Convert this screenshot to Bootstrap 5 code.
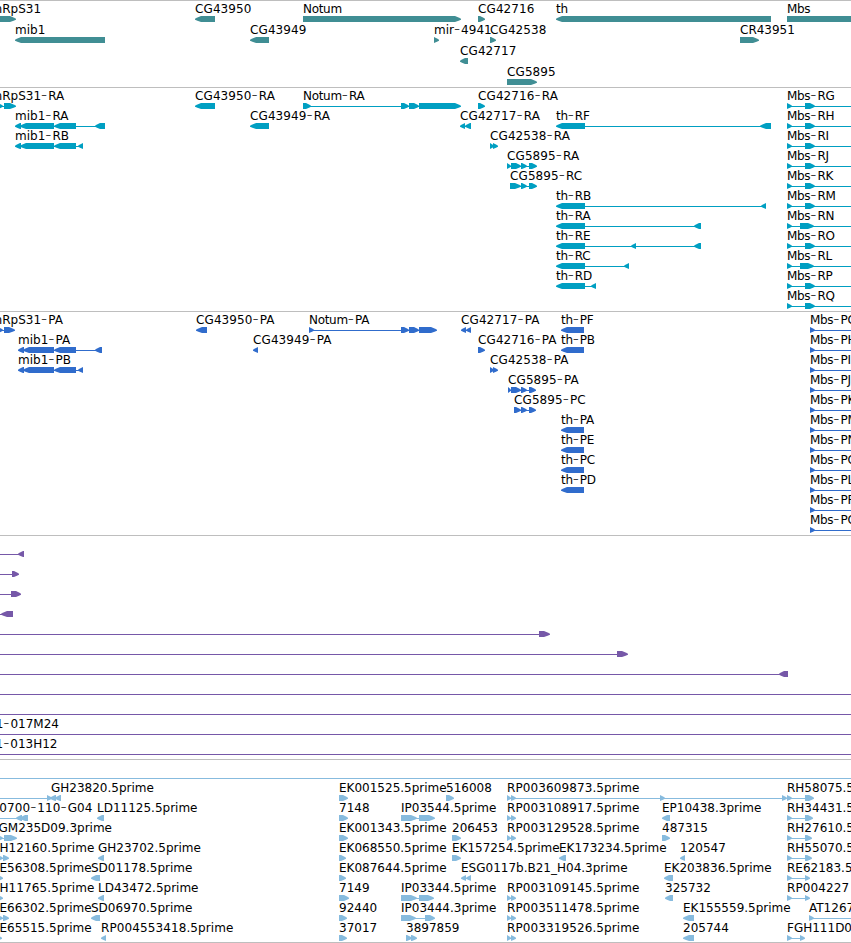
<!DOCTYPE html>
<html lang="en">
<head>
<meta charset="utf-8">
<meta name="viewport" content="width=device-width, initial-scale=1">
<title>Genome browser</title>
<link href="https://cdn.jsdelivr.net/npm/bootstrap@5.3.0/dist/css/bootstrap.min.css" rel="stylesheet">
<style>
  body { font-family: "DejaVu Sans", sans-serif; font-size: 12px; }
  .browser { height: 943px; }
  .track { border-top: 1px solid #bebebe; height: 224px; }
  .track-genes { height: 87px; color: #408e94; }
  .track-transcripts { color: #009fc2; }
  .track-proteins { color: #306ccc; }
  .track-clones { color: #7658a8; }
  .track-ests { height: 184px; color: #87bbde; border-bottom: 1px solid #bebebe; }
  .lane { height: 20px; flex: none; overflow: visible; }
  .track-genes .lane { height: 21px; }
  .lane text { fill: #000; font-size: 12px; }
  .lane .wide { letter-spacing: .1px; }
  .lane .tight { letter-spacing: -.3px; }
  .lane .dash { font-size: 17px; font-weight: 200; letter-spacing: 1px; }
</style>
</head>
<body class="bg-white m-0">
<main class="browser w-100 overflow-hidden d-flex flex-column">
  <section class="track track-genes d-flex flex-column flex-shrink-0" id="genes" aria-label="Genes"></section>
  <section class="track track-transcripts d-flex flex-column flex-shrink-0" id="transcripts" aria-label="Transcripts"></section>
  <section class="track track-proteins d-flex flex-column flex-shrink-0" id="proteins" aria-label="Proteins"></section>
  <section class="track track-clones d-flex flex-column flex-shrink-0" id="clones" aria-label="Clones"></section>
  <section class="track track-ests d-flex flex-column flex-shrink-0" id="ests" aria-label="ESTs"></section>
</main>
<script src="https://cdn.jsdelivr.net/npm/bootstrap@5.3.0/dist/js/bootstrap.bundle.min.js"></script>
<script>
// One string per lane; features are separated by ";".
// Feature: labelX | label | strand (> or <) | exons "a_b,a_b" | optional connector "from:to"
// A labelX that starts with "e" is the right end of the label; "~" is a minus sign.
const tracks = {
  genes: [
    "-9.5|mRpS31|>|~20_16;195|CG43950|<|195_215;303|Notum|>|303_461;478|CG42716|>|478_485;556|th|<|556_771;787|Mbs|>|787_900",
    "15|mib1|<|15_105;250|CG43949|<|250_269;434|mir-4941|>|434_439;490|CG42538|>|490_496;740|CR43951|>|740_759",
    "460|CG42717|<|460_468",
    "507|CG5895|>|507_537"
  ],
  transcripts: [
    "-9.5|mRpS31-RA|>|~5_3,4_16;195|CG43950-RA|<|195_215;303|Notum-RA|>|303_311,401_409,409_419,419_461;478|CG42716-RA|>|478_485;787|Mbs-RG|>|787_792,805_815|787:860",
    "15|mib1-RA|<|15_21,20_54,54_76,95_105;250|CG43949-RA|<|250_269;460|CG42717-RA|<|460_465,465_471;556|th-RF|<|556_585,760_771;787|Mbs-RH|>|787_792,805_815|787:860",
    "15|mib1-RB|<|15_21,20_54,54_76,78_83;490|CG42538-RA|>|490_494,493_498;787|Mbs-RI|>|787_792,805_815|787:860",
    "507|CG5895-RA|>|507_511,511_521,521_527,529_537;787|Mbs-RJ|>|787_792,805_815|787:860",
    "510|CG5895-RC|>|510_521,521_527,529_537;787|Mbs-RK|>|787_792,805_815|787:860",
    "556|th-RB|<|556_585,761_766;787|Mbs-RM|>|787_792,805_815|787:860",
    "556|th-RA|<|556_585,694_701;787|Mbs-RN|>|787_792,800_814|787:860",
    "556|th-RE|<|556_585,631_636,694_701;787|Mbs-RO|>|787_792,805_815|787:860",
    "556|th-RC|<|556_585,624_629;787|Mbs-RL|>|787_792,800_814|787:860",
    "556|th-RD|<|556_585,591_596;787|Mbs-RP|>|787_792,805_815|787:860",
    "787|Mbs-RQ|>|787_792,805_815|787:860"
  ],
  proteins: [
    "-9.5|mRpS31-PA|>|~5_3,4_15;196|CG43950-PA|<|196_207;309|Notum-PA|>|309_314,401_409,409_419,419_437;461|CG42717-PA|<|461_466,466_471;561|th-PF|<|561_584;810|Mbs-PG|>|810_815|810:860",
    "18|mib1-PA|<|18_24,23_54,54_76,95_102;253|CG43949-PA|<|253_258;478|CG42716-PA|>|478_485;561|th-PB|<|561_584;810|Mbs-PH|>|810_815|810:860",
    "18|mib1-PB|<|18_24,23_54,54_76,78_83;490|CG42538-PA|>|490_494,493_498;810|Mbs-PI|>|810_815|810:860",
    "508|CG5895-PA|>|508_511,511_521,521_527,529_536;810|Mbs-PJ|>|810_815|810:860",
    "514|CG5895-PC|>|514_521,521_527,529_536;810|Mbs-PK|>|810_815|810:860",
    "561|th-PA|<|561_584;810|Mbs-PM|>|810_815|810:860",
    "561|th-PE|<|561_584;810|Mbs-PN|>|810_815|810:860",
    "561|th-PC|<|561_584;810|Mbs-PO|>|810_815|810:860",
    "561|th-PD|<|561_584;810|Mbs-PL|>|810_815|810:860",
    "810|Mbs-PP|>|810_815|810:860",
    "810|Mbs-PQ|>|810_815|810:860"
  ],
  clones: [
    "0||<|18_24|0:20", "0||>|12_19|0:14", "0||>|11_21|0:14", "0||<|1_13|0:4",
    "0||>|539_550|0:540", "0||>|617_628|0:618", "0||<|779_788|0:782",
    "0||>||0:860", "0||>||0:860",
    "e59|1-017M24|>||0:860", "e57.5|1-013H12|>||0:860"
  ],
  ests: [
    "0||>||0:860",
    "0||>|47_52|0:48;51|GH23820.5prime|<|50_56,55_61;339|EK001525.5prime|>|339_348;446|516008|>|446_454;507|RP003609873.5prime|>|507_511,511_516,660_665,782_787;787|RH58075.5prime|>|787_792,805_814",
    "-0.8|0700-110-G04|<|16_22,20_28|0:18;97|LD11125.5prime|<|97_104;339|7148|>|339_348;401|IP03544.5prime|>|401_417,419_435;507|RP003108917.5prime|>|507_511,511_516;662|EP10438.3prime|<|662_670;787|RH34431.5prime|>|787_792,805_813",
    "-1.5|GM235D09.3prime|>|~4_3,4_17;339|EK001343.5prime|>|339_348;452|206453|>|452_461;507|RP003129528.5prime|>|507_511,511_516;662|487315|>|662_670;787|RH27610.5prime|>|787_792,805_812",
    "-0.5|H12160.5prime|>|~4_3,3_9;98|GH23702.5prime|<|98_104;339|EK068550.5prime|>|339_346;452|EK157254.5prime|>|452_461;559|EK173234.5prime|<|559_566;680|120547|<|680_685;787|RH55070.5prime|>|787_792,805_812",
    "-0.5|E56308.5prime|>|~4_3;91|SD01178.5prime|<|91_100;339|EK087644.5prime|>|339_346;461|ESG0117b.B21_H04.3prime|<|461_466,466_471;664|EK203836.5prime|<|664_673;787|RE62183.5prime|>|787_792,805_810",
    "-0.5|H11765.5prime|>|~4_3;98|LD43472.5prime|<|98_104;339|7149|>|339_349;401|IP03344.5prime|>|401_417,419_434;507|RP003109145.5prime|>|507_511,511_516;665|325732|<|665_673;787|RP004227|>|787_792,805_810",
    "-0.5|E66302.5prime|>|~4_3,3_9;91|SD06970.5prime|<|91_100;339|92440|>|339_347;401|IP03444.3prime|>|401_416,425_435;507|RP003511478.5prime|>|507_511,511_516;683|EK155559.5prime|<|683_694;809|AT12677|>|809_814|809:860",
    "-0.5|E65515.5prime|>|~4_2;101|RP004553418.5prime|<|101_106;339|37017|>|339_347;406|3897859|>|406_412,411_417;507|RP003319526.5prime|>|507_511,511_516;683|205744|<|683_694;787|FGH111D0|>|787_792,800_805"
  ]
};

// Block arrow: square at the tail, tapered to a point over the last pixels.
function exon(a, b, strand) {
  const w = b - a, h = Math.min(w, w > 10 ? 6 : 5), m = h * 0.6;
  const p = strand === ">"
    ? [[a,15],[b-h,15],[b-h+m,16.6],[b,17.8],[b,18.8],[b-h+m,19.8],[b-h,21],[a,21]]
    : [[b,15],[a+h,15],[a+h-m,16.6],[a,17.8],[a,18.8],[a+h-m,19.8],[a+h,21],[b,21]];
  return `<polygon points="${p.map(q => q.join()).join(" ")}"/>`;
}

function feature(spec) {
  const [x, label, strand, exonList, link] = spec.split("|");
  const exons = exonList ? exonList.replace("~", "-").split(",").map(e => e.split("_").map(Number)) : [];
  const span = link ? link.split(":").map(Number)
    : exons.length > 1 ? [exons[0][0] + 2, exons[exons.length - 1][1] - 2] : null;
  let out = span ? `<rect x="${span[0]}" y="18" width="${span[1] - span[0]}" height="1"/>` : "";
  out += exons.map(e => exon(e[0], e[1], strand)).join("");
  if (label) {
    const end = x[0] === "e";
    const fit = /^(Notum|th|Mbs)/.test(label) ? "tight" : /^(RP00|H1|CG|0700)/.test(label) ? "wide" : "";
    out += `<text class="${fit}" x="${end ? x.slice(1) : x}" y="12"${end ? ' text-anchor="end"' : ""}>` +
      label.replace(/-/g, '<tspan class="dash">-</tspan>') + "</text>";
  }
  return out;
}

for (const [id, lanes] of Object.entries(tracks)) {
  document.getElementById(id).innerHTML = lanes.map(lane =>
    `<svg class="lane w-100" fill="currentColor">${lane.split(";").map(feature).join("")}</svg>`).join("");
}
</script>
</body>
</html>
